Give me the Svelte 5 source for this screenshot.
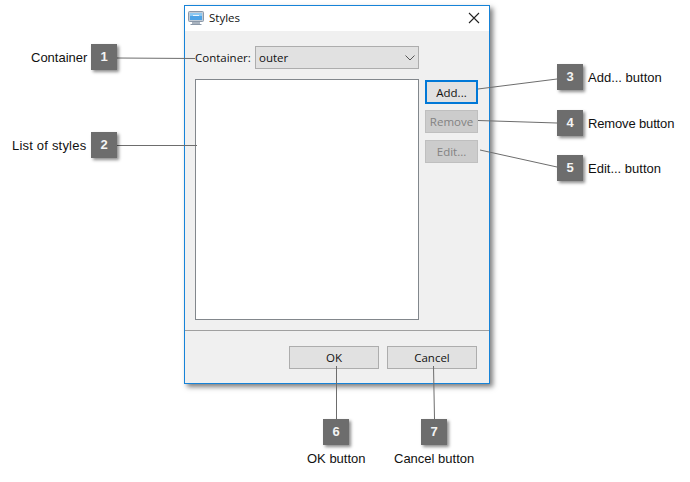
<script lang="ts">
	const callouts = [
		{ n: 1, x: 91, y: 44 },
		{ n: 2, x: 91, y: 132 },
		{ n: 3, x: 557, y: 64 },
		{ n: 4, x: 557, y: 110 },
		{ n: 5, x: 557, y: 155 },
		{ n: 6, x: 323, y: 419 },
		{ n: 7, x: 421, y: 419 },
	];
	const captions = [
		{ text: 'Container', x: 31, y: 50, cls: '' },
		{ text: 'List of styles', x: 12, y: 138, cls: 'loose' },
		{ text: 'Add... button', x: 588, y: 70, cls: '' },
		{ text: 'Remove button', x: 588, y: 116, cls: 'tight' },
		{ text: 'Edit... button', x: 588, y: 161, cls: '' },
		{ text: 'OK button', x: 307, y: 451, cls: '' },
		{ text: 'Cancel button', x: 394, y: 451, cls: '' },
	];
	const lines = [
		[117, 58, 195, 58.5],
		[117, 145.5, 197, 145.5],
		[478, 89, 557, 79],
		[478, 120.5, 557, 123],
		[480, 150, 557, 167],
		[336.5, 366, 336.5, 419],
		[433.5, 366, 434.5, 419],
	];
</script>

<div class="canvas">
	<div class="dialog">
		<div class="titlebar">
			<svg class="app-icon" width="16" height="16" viewBox="0 0 16 16">
				<rect x="0.5" y="1.5" width="15" height="10" rx="1" fill="#c3ccd6" stroke="#8b98a8" />
				<rect x="2" y="3" width="12" height="7" fill="#4da3e6" />
				<rect x="2" y="3" width="12" height="3" fill="#8cc8f2" />
				<rect x="5" y="5" width="6" height="1" fill="#eef6fc" />
				<rect x="4" y="12" width="8" height="2" fill="#a9b3bf" />
				<rect x="2.5" y="14" width="11" height="1" fill="#8b98a8" />
			</svg>
			<span class="title">Styles</span>
			<svg class="close" width="12" height="12" viewBox="0 0 12 12">
				<path d="M1 1 L11 11 M11 1 L1 11" stroke="#222" stroke-width="1.1" fill="none" />
			</svg>
		</div>
		<div class="body">
			<div class="container-row">
				<span class="field-label">Container:</span>
				<div class="select">
					<span>outer</span>
					<svg width="10" height="6" viewBox="0 0 10 6">
						<path d="M0.5 0.5 L5 5 L9.5 0.5" stroke="#555" fill="none" />
					</svg>
				</div>
			</div>
			<div class="main-row">
				<div class="listbox"></div>
				<div class="side-buttons">
					<button class="btn focused">Add...</button>
					<button class="btn disabled">Remove</button>
					<button class="btn disabled edit">Edit...</button>
				</div>
			</div>
		</div>
		<div class="footer">
			<button class="btn wide">OK</button>
			<button class="btn wide">Cancel</button>
		</div>
	</div>

	<svg class="leaders" width="690" height="482">
		{#each lines as l}
			<line x1={l[0]} y1={l[1]} x2={l[2]} y2={l[3]} />
		{/each}
	</svg>

	{#each callouts as c}
		<div class="badge" style:left="{c.x}px" style:top="{c.y}px">{c.n}</div>
	{/each}
	{#each captions as c}
		<div class="caption {c.cls}" style:left="{c.x}px" style:top="{c.y}px">{c.text}</div>
	{/each}
</div>

<style>
	:global(body) {
		margin: 0;
		background: #fff;
	}

	.canvas {
		position: relative;
		width: 690px;
		height: 482px;
		overflow: hidden;
		background: #fff;
	}

	.dialog {
		position: absolute;
		left: 184px;
		top: 5px;
		width: 306px;
		height: 379px;
		box-sizing: border-box;
		display: flex;
		flex-direction: column;
		background: #f0f0f0;
		border: 1px solid #1683d8;
		box-shadow: 3px 3px 5px rgba(0, 0, 0, 0.5);
		font-family: "Open Sans", sans-serif;
		font-size: 11.5px;
		color: #111;
	}

	.titlebar {
		box-sizing: border-box;
		height: 25px;
		flex-shrink: 0;
		background: #fff;
		display: flex;
		align-items: center;
		padding: 0 9px 2px 3px;
		gap: 5px;
	}

	.title {
		flex: 1;
	}

	.body {
		flex: 1;
		padding: 15px 11px 0 10px;
		display: flex;
		flex-direction: column;
		gap: 10px;
	}

	.container-row {
		display: flex;
		align-items: center;
		justify-content: space-between;
		width: 224px;
	}

	.select {
		box-sizing: border-box;
		width: 164px;
		height: 23px;
		background: #e1e1e1;
		border: 1px solid #adadad;
		display: flex;
		align-items: center;
		justify-content: space-between;
		padding: 0 3px 0 3px;
	}

	.main-row {
		display: flex;
		gap: 6px;
	}

	.listbox {
		box-sizing: border-box;
		width: 224px;
		height: 241px;
		background: #fff;
		border: 1px solid #82878c;
	}

	.side-buttons {
		display: flex;
		flex-direction: column;
		gap: 6px;
		padding-top: 1px;
	}

	.btn {
		box-sizing: border-box;
		margin: 0;
		padding: 0;
		width: 53px;
		height: 23px;
		background: #e1e1e1;
		border: 1px solid #adadad;
		font: inherit;
		color: inherit;
	}

	.focused {
		height: 24px;
		border: 2px solid #0078d7;
	}

	.disabled {
		background: #cccccc;
		border-color: #bfbfbf;
		color: #838383;
	}

	.edit {
		margin-top: 1px;
	}

	.footer {
		height: 53px;
		box-sizing: border-box;
		flex-shrink: 0;
		border-top: 1px solid #a0a0a0;
		display: flex;
		justify-content: flex-end;
		gap: 8px;
		padding: 15px 12px 0 0;
	}

	.wide {
		width: 90px;
	}

	.leaders {
		position: absolute;
		left: 0;
		top: 0;
		pointer-events: none;
	}

	.leaders line {
		stroke: #6d6d6d;
		stroke-width: 1;
	}

	.badge {
		position: absolute;
		width: 26px;
		height: 26px;
		background: #6d6d6d;
		box-shadow: 2px 2px 3px rgba(0, 0, 0, 0.45);
		color: #f4f4f4;
		font-family: "Liberation Sans", Arial, sans-serif;
		font-size: 13px;
		font-weight: 700;
		line-height: 26px;
		text-align: center;
	}

	.caption {
		position: absolute;
		font-family: "Liberation Sans", Arial, sans-serif;
		font-size: 13px;
		line-height: 15px;
		color: #111;
		white-space: nowrap;
	}

	.loose {
		letter-spacing: 0.2px;
	}

	.tight {
		letter-spacing: -0.15px;
	}
</style>
